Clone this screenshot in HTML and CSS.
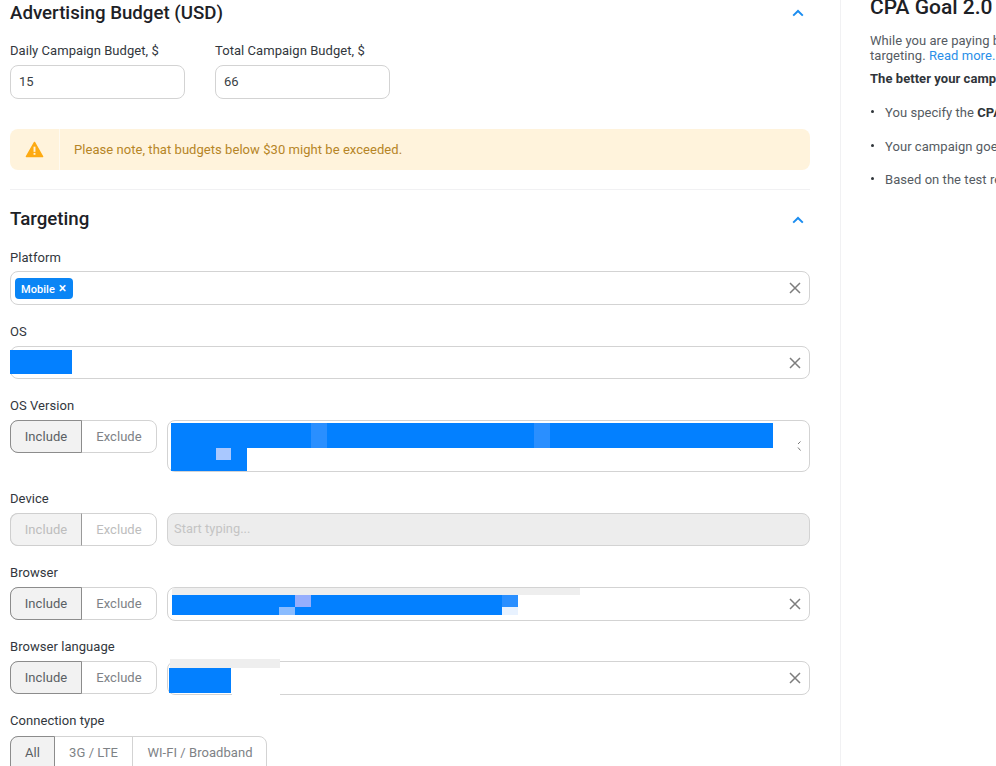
FILE: index.html
```html
<!DOCTYPE html>
<html lang="en">
<head>
<meta charset="utf-8">
<title>Campaign</title>
<link rel="stylesheet" href="styles.css">
</head>
<body>
<div class="page">
  <main class="main">
    <section class="budget">
      <div class="section-head budget-head">
        <h2>Advertising Budget (USD)</h2>
        <svg class="chev" viewBox="0 0 12 8"><path d="M1.2 6.600 6 2l4.800 4.600" /></svg>
      </div>
      <div class="budget-row">
        <div class="budget-col">
          <label class="label">Daily Campaign Budget, $</label>
          <div class="input">15</div>
        </div>
        <div class="budget-col">
          <label class="label">Total Campaign Budget, $</label>
          <div class="input">66</div>
        </div>
      </div>
      <div class="alert">
        <div class="alert-icon">
          <svg viewBox="0 0 20 18" width="19" height="17"><path class="tri" d="M10 1.500 18.600 16.500H1.400Z"/><rect class="mark" x="9" y="6" width="2" height="5.500"/><rect class="mark" x="9" y="12.600" width="2" height="2"/></svg>
        </div>
        <div class="alert-text">Please note, that budgets below $30 might be exceeded.</div>
      </div>
    </section>
    <section class="targeting">
      <div class="section-head target-head">
        <h2>Targeting</h2>
        <svg class="chev chev-low" viewBox="0 0 12 8"><path d="M1.2 6.600 6 2l4.800 4.600" /></svg>
      </div>

      <div class="field">
        <label class="label label-low">Platform</label>
        <div class="select h34">
          <span class="tag">Mobile <span class="tag-x">×</span></span>
          <svg class="clear" viewBox="0 0 12 12"><path d="M1 1l10 10M11 1 1 11"/></svg>
        </div>
      </div>

      <div class="field">
        <label class="label">OS</label>
        <div class="select h33">
          <span class="redact r-os"></span>
          <svg class="clear clear-33" viewBox="0 0 12 12"><path d="M1 1l10 10M11 1 1 11"/></svg>
        </div>
      </div>

      <div class="field">
        <label class="label">OS Version</label>
        <div class="row">
          <div class="toggle"><span class="opt on">Include</span><span class="opt">Exclude</span></div>
          <div class="select grow h52">
            <span class="redact r-v1"><i class="pale p1"></i><i class="pale p2"></i></span>
            <span class="redact r-v2"><i class="pale p3"></i></span>
            <svg class="scroll-mark" viewBox="0 0 4 10"><path d="M3.500 .5 1 3M1 6.500 3.500 9.500"/></svg>
          </div>
        </div>
      </div>

      <div class="field">
        <label class="label">Device</label>
        <div class="row">
          <div class="toggle disabled"><span class="opt on">Include</span><span class="opt">Exclude</span></div>
          <div class="select grow h33 off"><span class="placeholder">Start typing...</span></div>
        </div>
      </div>

      <div class="field field-tight">
        <label class="label">Browser</label>
        <div class="row">
          <div class="toggle"><span class="opt on">Include</span><span class="opt">Exclude</span></div>
          <div class="select grow h34">
            <span class="smudge s-b"></span>
            <span class="redact r-b"><i class="pale p4"></i><i class="pale p5"></i></span>
            <span class="redact r-b2"></span>
            <span class="redact r-b3"></span>
            <svg class="clear" viewBox="0 0 12 12"><path d="M1 1l10 10M11 1 1 11"/></svg>
          </div>
        </div>
      </div>

      <div class="field">
        <label class="label">Browser language</label>
        <div class="row">
          <div class="toggle"><span class="opt on">Include</span><span class="opt">Exclude</span></div>
          <div class="select grow h34">
            <span class="smudge s-l"></span>
            <span class="wipe"></span>
            <span class="redact r-l"></span>
            <svg class="clear" viewBox="0 0 12 12"><path d="M1 1l10 10M11 1 1 11"/></svg>
          </div>
        </div>
      </div>

      <div class="field">
        <label class="label label-high">Connection type</label>
        <div class="toggle conn"><span class="opt on o-all">All</span><span class="opt o-3g">3G / LTE</span><span class="opt o-wifi">WI-FI / Broadband</span></div>
      </div>
    </section>
  </main>
  <aside class="side">
    <h3>CPA Goal 2.0</h3>
    <p class="intro">While you are paying based on the results, you optimize<br>targeting. <a href="#">Read more.</a></p>
    <p class="strong">The better your campaign performs, the more you get</p>
    <ul>
      <li>You specify the <b>CPA Goal</b> you would like to reach</li>
      <li>Your campaign goes through the test period first</li>
      <li>Based on the test results the system optimizes it</li>
    </ul>
  </aside>
</div>
</body>
</html>
```
FILE: styles.css
```css
* { box-sizing: border-box; }
html, body { margin: 0; height: 100%; overflow: hidden; background: #fff; }
body { font-family: Roboto, "Liberation Sans", sans-serif; color: #212529; font-size: 13px; letter-spacing: .05px; }
.page { display: flex; height: 766px; width: 996px; overflow: hidden; }
.main { width: 841px; flex: none; padding: 0 30px 0 10px; border-right: 1px solid #f1f1f3; }
.side { flex: none; width: 400px; padding-left: 29px; color: #555b62; font-size: 13px; line-height: 15px; }
h2 { margin: 0; font-size: 18.7px; font-weight: 500; line-height: 24px; color: #1d2126; letter-spacing: 0; }
.section-head { display: flex; justify-content: space-between; align-items: center; }
.budget-head { height: 25px; padding-top: 1px; margin-bottom: 16px; }
.target-head { height: 25px; padding-top: 1px; margin-bottom: 16px; }
.chev { width: 12px; height: 8px; margin-right: 6px; fill: none; stroke: #1b8df0; stroke-width: 2; }
.chev-low { margin-top: 2px; }
.label { display: block; font-size: 13px; line-height: 20px; color: #32373d; margin-bottom: 4px; }
.label-low { line-height: 22px; margin-bottom: 2px; }
.label-high { line-height: 18px; margin-bottom: 6px; }
.budget-row { display: flex; gap: 30px; margin-bottom: 30px; }
.budget-col { width: 175px; }
.input { height: 34px; border: 1px solid #d3d3d3; border-radius: 8px; padding: 0 8px; line-height: 32px; font-size: 13px; color: #3a3f45; }
.alert { display: flex; height: 41px; background: #fff3dc; border-radius: 8px; align-items: stretch; }
.alert-icon { width: 50px; display: flex; align-items: center; justify-content: center; border-right: 1px solid #fffaf0; }
.tri { fill: #fdaa12; stroke: #fdaa12; stroke-width: 1.5; stroke-linejoin: round; }
.mark { fill: #fff3dc; }
.alert-text { padding-left: 14px; line-height: 41px; color: #b68526; font-size: 13px; }
.targeting { margin-top: 19px; border-top: 1px solid #f1f1f3; padding-top: 16px; }
.field { margin-bottom: 17px; }
.field-tight { margin-bottom: 16px; }
.row { display: flex; gap: 10px; }
.grow { flex: 1; min-width: 0; }
.select { position: relative; border: 1px solid #d3d3d3; border-radius: 8px; background: #fff; }
.h34 { height: 34px; }
.h33 { height: 33px; }
.h52 { height: 52px; }
.off { background: #ededed; }
.placeholder { display: block; padding-left: 6px; line-height: 29px; color: #c4c4c4; font-size: 12.8px; }
.tag { position: absolute; left: 4px; top: 6px; height: 21px; width: 58px; background: #0a85f5; color: #fff; border-radius: 4px; font-size: 11px; font-weight: 500; line-height: 21px; padding-left: 6px; white-space: nowrap; }
.tag-x { font-size: 14px; font-weight: 500; margin-left: 1px; }
.clear { position: absolute; right: 8px; top: 10px; width: 12px; height: 12px; fill: none; stroke: #7d7d7d; stroke-width: 1.500; }
.clear-33 { top: 9.500px; }
.toggle { display: flex; height: 33px; width: 147px; border: 1px solid #d3d3d3; border-radius: 8px; flex: none; background: #fff; }
.opt { display: block; width: 74px; line-height: 31px; text-align: center; color: #7e8286; font-size: 13px; }
.opt.on { width: 72px; margin: -1px 0 -1px -1px; line-height: 31px; background: #f2f2f2; color: #5a5f64; border: 1px solid #8c8c8c; border-radius: 8px 0 0 8px; }
.disabled .opt { color: #bdbdbd; }
.disabled .opt.on { color: #bdbdbd; border-color: #cfcfcf; border-right-color: #9a9a9a; }
.conn { width: 257px; height: 40px; }
.conn .opt { border-right: 1px solid #d3d3d3; flex: none; }
.conn .o-all { width: 45px; border-right-color: #8c8c8c; }
.conn .o-3g { width: 78px; }
.conn .o-wifi { width: 134px; border-right: 0; white-space: nowrap; }
.redact { position: absolute; display: block; background: #0380ff; }
.pale { position: absolute; display: block; }
.r-os { left: -1px; top: 3px; width: 62px; height: 24px; }
.r-v1 { left: 3px; top: 2px; width: 602px; height: 25px; }
.p1 { left: 140px; top: 0; width: 16px; height: 25px; background: #2a8fff; }
.p2 { left: 363px; top: 0; width: 16px; height: 25px; background: #2a8fff; }
.r-v2 { left: 3px; top: 27px; width: 76px; height: 23px; }
.p3 { left: 45px; top: 0; width: 15px; height: 12px; background: #a9c8ff; }
.scroll-mark { position: absolute; right: 8px; top: 20px; width: 4px; height: 10px; fill: none; stroke: #777; stroke-width: 1; }
.smudge { position: absolute; display: block; background: #eeeeee; }
.s-b { left: 4px; top: 0; width: 408px; height: 7px; }
.r-b { left: 4px; top: 7px; width: 330px; height: 20px; }
.p4 { left: 123px; top: 0; width: 16px; height: 12px; background: #96aefd; }
.p5 { left: 107px; top: 12px; width: 16px; height: 8px; background: #8abcff; }
.r-b2 { left: 334px; top: 7px; width: 16px; height: 12px; background: #2a8fff; }
.r-b3 { left: 334px; top: 19px; width: 16px; height: 8px; background: #e8f2ff; }
.s-l { left: 2px; top: -3px; width: 110px; height: 9px; }
.wipe { position: absolute; display: block; left: 64px; top: 6px; width: 48px; height: 29px; background: #fff; }
.r-l { left: 1px; top: 6px; width: 62px; height: 25px; }
h3 { margin: 0 0 19px; font-size: 21px; font-weight: 500; line-height: 14px; color: #1d2126; white-space: nowrap; letter-spacing: 0; }
.intro { margin: 0 0 8px; white-space: nowrap; }
.intro a { color: #2a8fe8; text-decoration: none; }
.strong { margin: 0 0 19px; font-weight: 700; color: #30353a; white-space: nowrap; }
ul { list-style: none; margin: 0; padding: 0; }
li { position: relative; padding-left: 15px; margin-bottom: 18.500px; white-space: nowrap; }
li::before { content: ""; position: absolute; left: 1px; top: 5px; width: 3px; height: 3px; border-radius: 50%; background: #30353a; }
li b { color: #30353a; }
```
